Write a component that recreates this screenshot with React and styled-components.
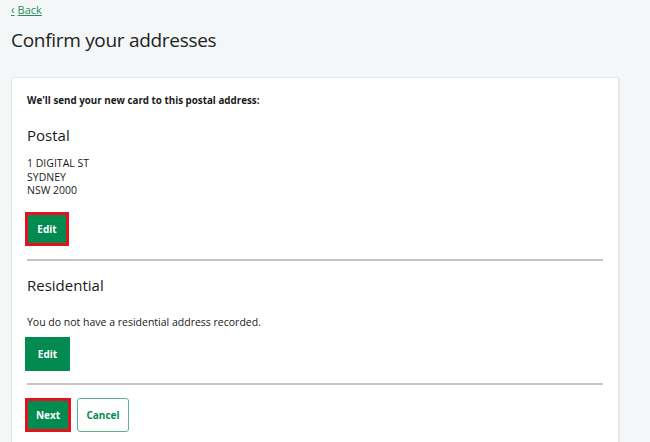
import React from 'react';
import { styled, createGlobalStyle } from 'styled-components';

const GlobalStyle = createGlobalStyle`
  body {
    margin: 0;
    background: #f4f7f7;
    font-family: 'Open Sans', 'Noto Sans', sans-serif;
    color: #1a1a1a;
  }
`;

const Page = styled.div`
  padding: 3px 31px 0 11px;
`;

const BackLink = styled.a`
  display: flex;
  width: fit-content;
  align-items: center;
  gap: 3px;
  font-size: 11px;
  line-height: 14px;
  color: #2b8a5e;
  text-decoration: underline;
  cursor: pointer;
`;

const Chevron = styled.span`
  font-size: 12px;
`;

const Title = styled.h1`
  margin: 9px 0 23px;
  font-size: 19px;
  font-weight: 400;
  line-height: 28px;
  letter-spacing: -0.3px;
  color: #222;
`;

const Card = styled.section`
  background: #fff;
  border: 1px solid #e3e7e7;
  border-radius: 3px;
  box-shadow: 1px 0 1px rgba(0, 0, 0, 0.04);
  padding: 16px 15px 30px 15px;
`;

const Lead = styled.p`
  margin: 0;
  font-size: 9.8px;
  font-weight: 700;
  line-height: 14px;
`;

const Heading = styled.h2`
  margin: ${p => p.$top}px 0 ${p => p.$bottom}px;
  font-size: 15px;
  font-weight: 400;
  line-height: 20px;
`;

const Text = styled.p`
  margin: 0;
  font-size: 10.5px;
  line-height: 13.5px;
`;

const Button = styled.button`
  display: inline-flex;
  align-items: center;
  justify-content: center;
  box-sizing: border-box;
  width: ${p => p.$w}px;
  height: 34px;
  padding: 0;
  font-family: inherit;
  font-size: 10px;
  font-weight: 700;
  border-radius: ${p => (p.$secondary ? 3 : 0)}px;
  cursor: pointer;
  background: ${p => (p.$secondary ? '#fff' : '#028a51')};
  color: ${p => (p.$secondary ? '#028a51' : '#fff')};
  border: ${p => (p.$secondary ? '1px solid #5db38d' : '1px solid #028a51')};
  outline: ${p => (p.$focus ? '3px solid #e3131e' : 'none')};
  outline-offset: -3px;
`;

const Actions = styled.div`
  display: flex;
  gap: 6px;
  margin-top: ${p => p.$top}px;
  margin-left: -2px;
`;

const Divider = styled.hr`
  margin: ${p => p.$top}px 0 0;
  border: 0;
  border-top: 2px solid #c4c4c4;
`;

export default function App() {
  return (
    <>
      <GlobalStyle />
      <Page>
        <BackLink>
          <Chevron>‹</Chevron>Back
        </BackLink>
        <Title>Confirm your addresses</Title>
        <Card>
          <Lead>We'll send your new card to this postal address:</Lead>
          <Heading $top={17} $bottom={12}>Postal</Heading>
          <Text>1 DIGITAL ST</Text>
          <Text>SYDNEY</Text>
          <Text>NSW 2000</Text>
          <Actions $top={14}>
            <Button $w={44} $focus>Edit</Button>
          </Actions>
          <Divider $top={13} />
          <Heading $top={14} $bottom={21}>Residential</Heading>
          <Text>You do not have a residential address recorded.</Text>
          <Actions $top={8}>
            <Button $w={45}>Edit</Button>
          </Actions>
          <Divider $top={12} />
          <Actions $top={13}>
            <Button $w={46} $focus>Next</Button>
            <Button $w={52} $secondary>Cancel</Button>
          </Actions>
        </Card>
      </Page>
    </>
  );
}
